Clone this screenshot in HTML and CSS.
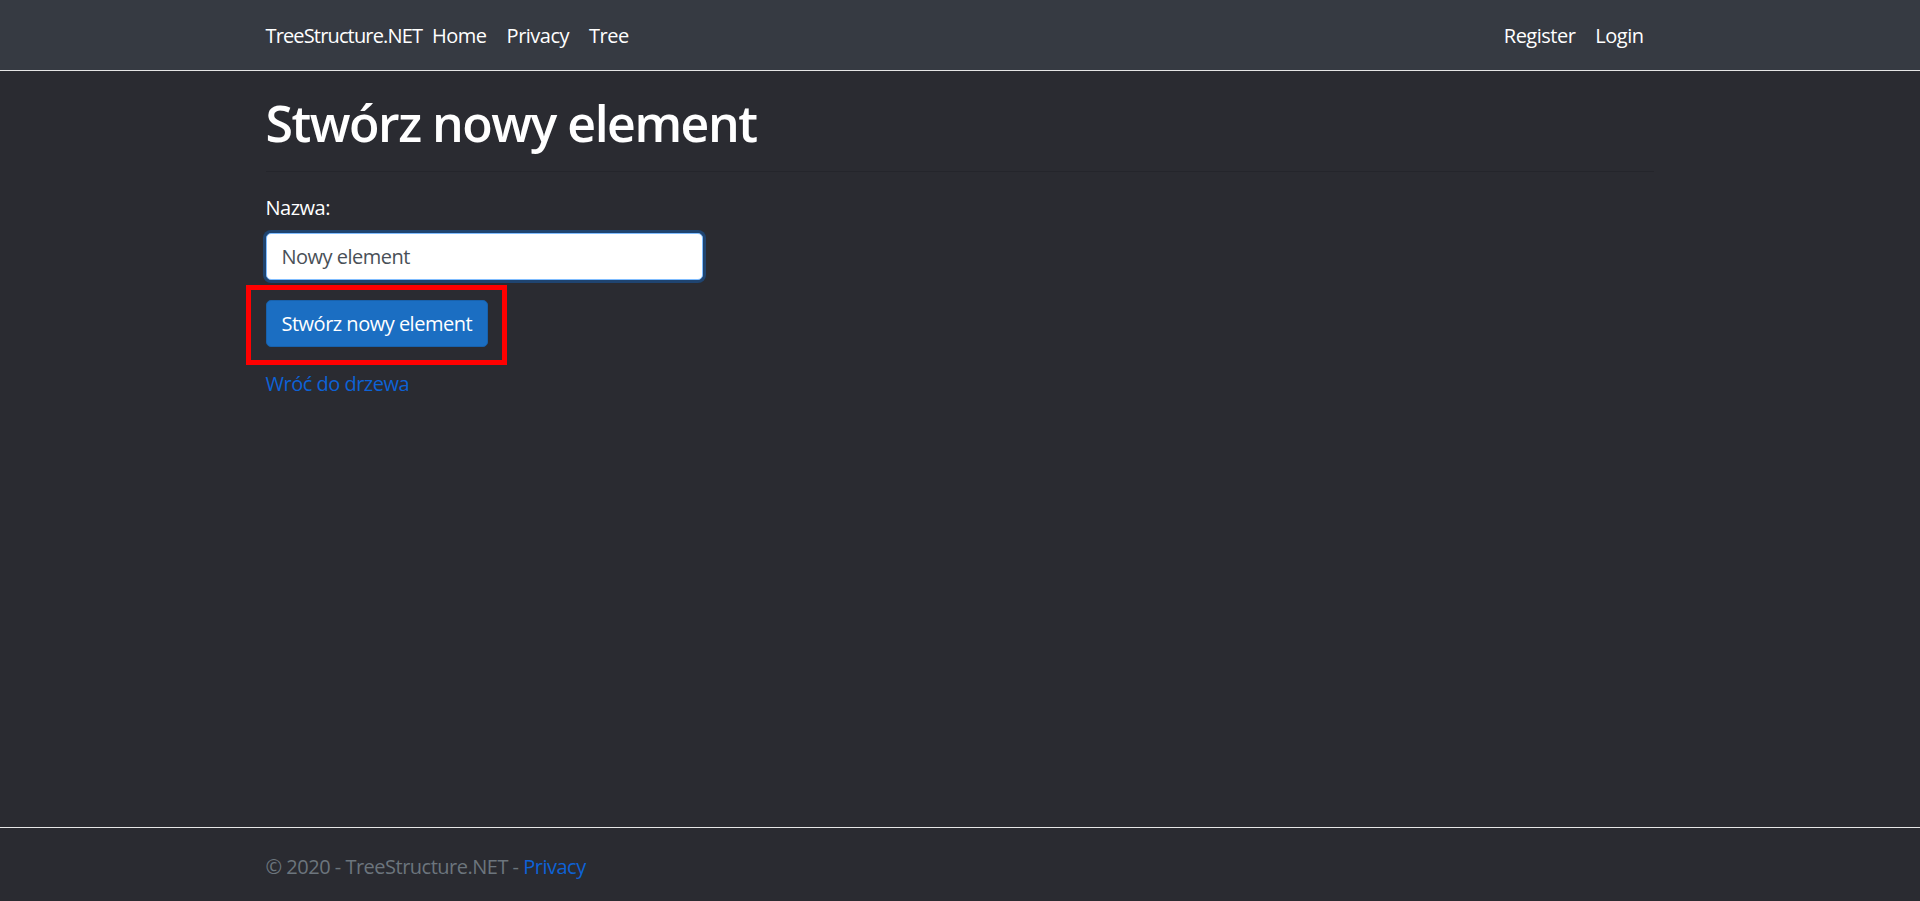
FILE: index.html
```html
<!DOCTYPE html>
<html lang="pl">
<head>
<meta charset="utf-8">
<title>Stwórz nowy element - TreeStructure.NET</title>
<link rel="stylesheet" href="styles.css">
</head>
<body>
<header class="navbar">
  <div class="container nav-inner">
    <a class="brand" href="#">TreeStructure.NET</a>
    <ul class="nav-list">
      <li><a class="nav-link" href="#">Home</a></li>
      <li><a class="nav-link" href="#">Privacy</a></li>
      <li><a class="nav-link" href="#">Tree</a></li>
    </ul>
    <ul class="nav-list nav-right">
      <li><a class="nav-link" href="#">Register</a></li>
      <li><a class="nav-link" href="#">Login</a></li>
    </ul>
  </div>
</header>

<main class="container main">
  <h1 class="title">Stwórz nowy element</h1>
  <div class="divider"></div>
  <form class="form">
    <div class="form-group">
      <label class="label" for="name">Nazwa:</label>
      <input class="input" id="name" type="text" value="Nowy element">
    </div>
    <div class="form-group">
      <span class="highlight"><button class="btn" type="button">Stwórz nowy element</button></span>
    </div>
  </form>
  <div class="back">
    <a class="link" href="#">Wróć do drzewa</a>
  </div>
</main>

<footer class="footer">
  <div class="container footer-inner">
    © 2020 - TreeStructure.NET - <a class="link" href="#">Privacy</a>
  </div>
</footer>
</body>
</html>
```

FILE: styles.css
```css
* { box-sizing: border-box; }

html, body {
  margin: 0;
  padding: 0;
}

body {
  min-height: 100vh;
  display: flex;
  flex-direction: column;
  background: #2a2b31;
  color: #ffffff;
  font-family: "Open Sans", "Noto Sans", "Liberation Sans", sans-serif;
  font-size: 20px;
  line-height: 30px;
  letter-spacing: -0.5px;
}

a { text-decoration: none; }

.container {
  width: 1425px;
  margin: 0 auto;
  padding: 0 19px 0 18px;
}

.navbar {
  height: 71px;
  background: #363a42;
  border-bottom: 1px solid #e6e6e6;
}

.nav-inner {
  height: 70px;
  display: flex;
  align-items: center;
  padding-top: 1px;
}

.brand {
  color: #ffffff;
  font-size: 20px;
  line-height: 30px;
  letter-spacing: -0.85px;
  padding: 0;
}

.nav-list {
  list-style: none;
  margin: 0;
  padding: 0;
  display: flex;
}

.nav-right {
  margin-left: auto;
}

.nav-link {
  display: block;
  color: #ffffff;
  padding: 10px 10px;
  line-height: 30px;
}

.main {
  padding-top: 22px;
  flex: 1 0 auto;
}

.title {
  margin: 0;
  font-size: 50px;
  line-height: 60px;
  font-weight: 600;
  letter-spacing: -1.5px;
}

.divider {
  margin-top: 18px;
  height: 1px;
  background: rgba(0, 0, 0, 0.12);
}

.form {
  width: 437px;
  padding-top: 21px;
}

.form-group {
  margin-bottom: 20px;
}

.label {
  display: block;
  margin-bottom: 10px;
}

.input {
  display: block;
  width: 100%;
  height: 47px;
  padding: 7px 15px;
  font-family: inherit;
  font-size: 20px;
  line-height: 30px;
  letter-spacing: -0.5px;
  color: #495057;
  background: #ffffff;
  border: 1px solid #80bdff;
  border-radius: 5px;
  box-shadow: 0 0 0 3px #1f4470;
  outline: none;
}

.highlight {
  position: relative;
  display: inline-block;
}

.highlight::after {
  content: "";
  position: absolute;
  top: -15px;
  left: -20px;
  right: -19px;
  bottom: -18px;
  border: 5px solid #ff0000;
  pointer-events: none;
}

.btn {
  display: block;
  height: 47px;
  padding: 7px 15px;
  font-family: inherit;
  font-size: 20px;
  line-height: 30px;
  letter-spacing: -0.5px;
  color: #ffffff;
  background: #1b6ec2;
  border: 1px solid #1861ac;
  border-radius: 5px;
}

.back {
  padding-top: 2px;
}

.link {
  color: #0d62d6;
}

.footer {
  border-top: 1px solid #e6e6e6;
  height: 74px;
  overflow: hidden;
  color: #6c757d;
}

.footer-inner {
  line-height: 78px;
}
```
